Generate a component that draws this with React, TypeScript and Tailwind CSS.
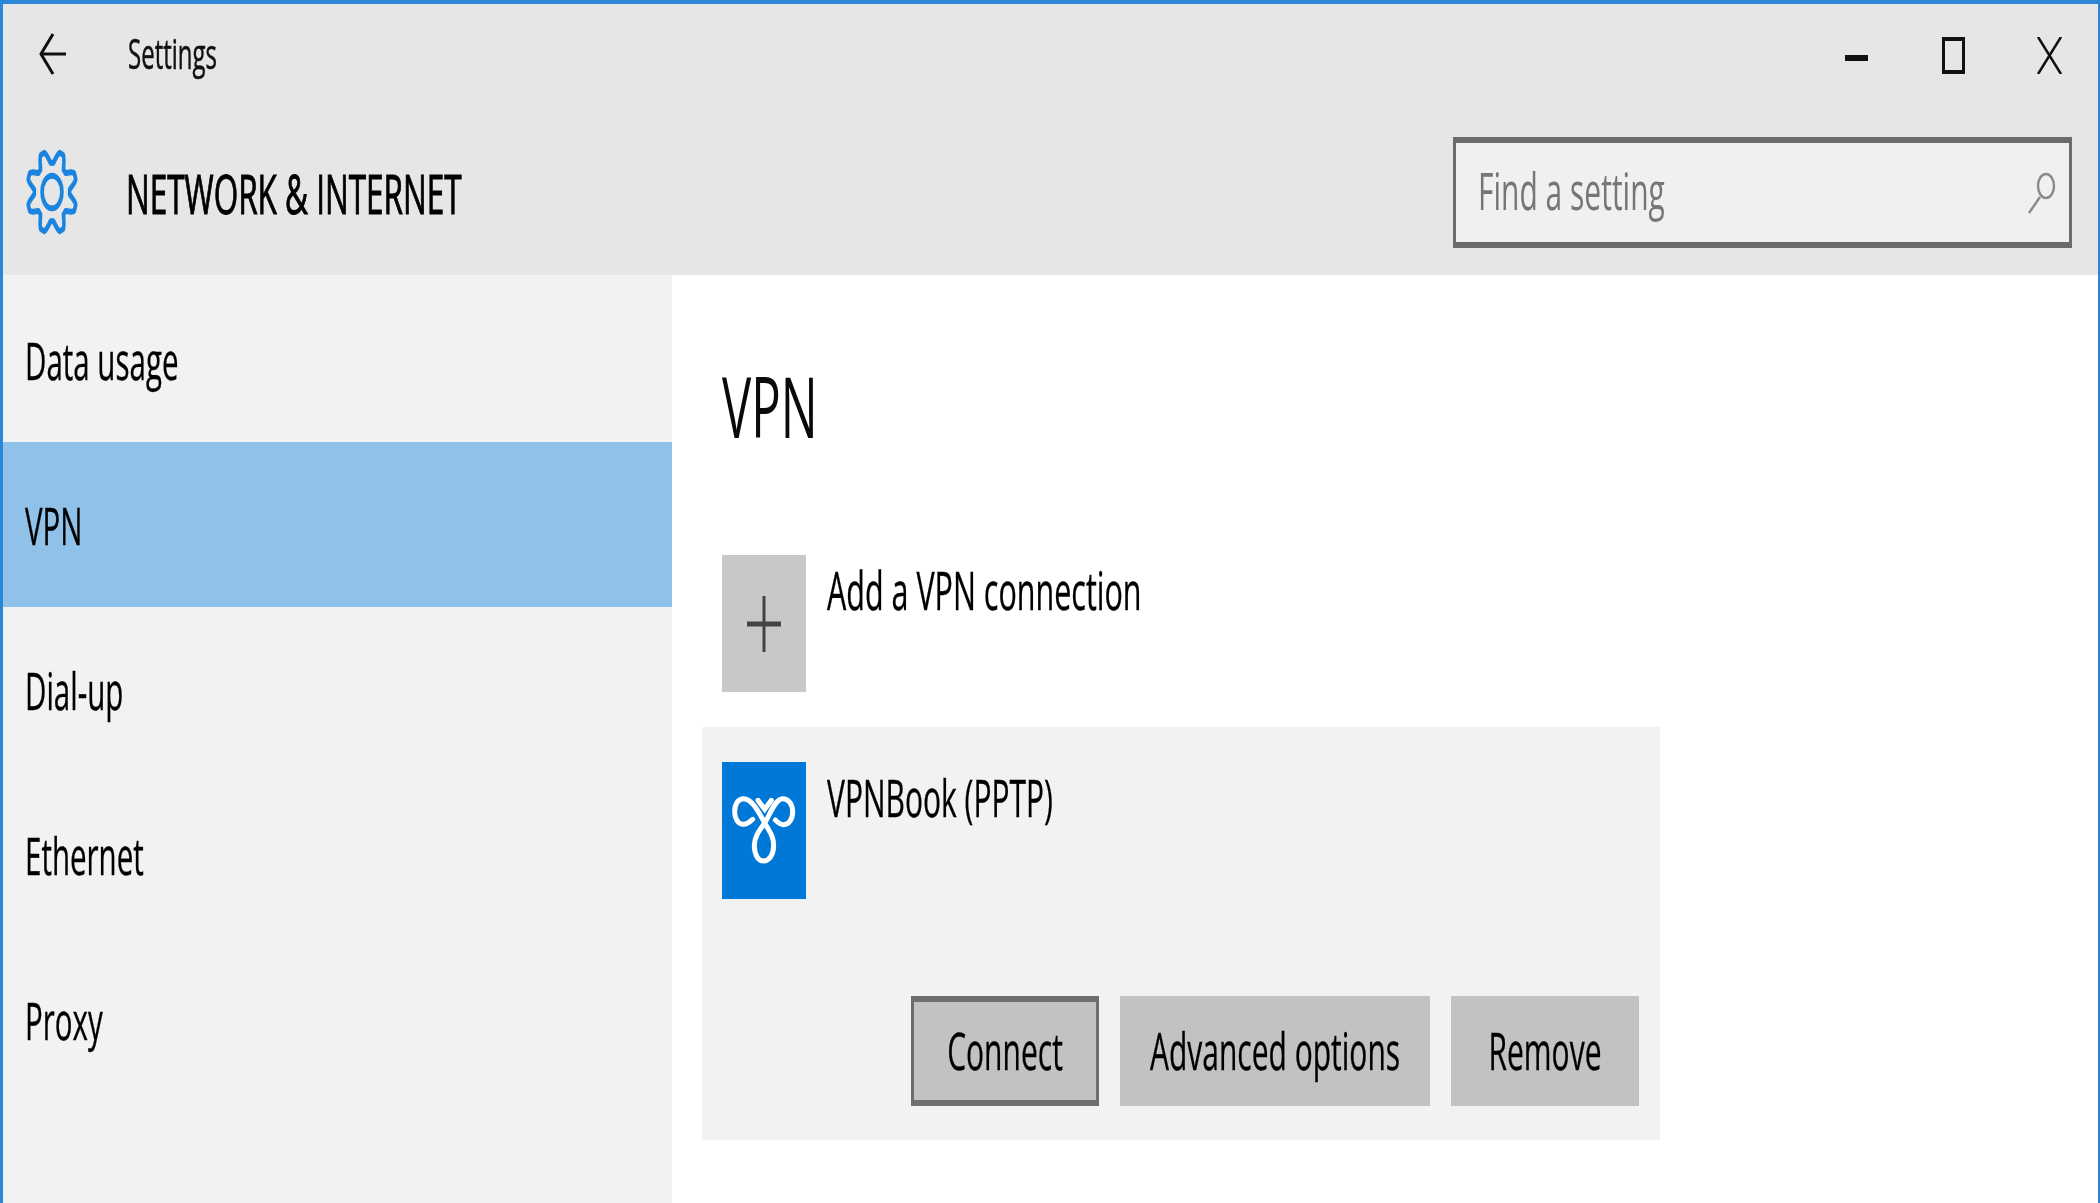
import React from "react";

const FONT = "font-['Open_Sans','Noto_Sans',sans-serif]";

function T({ children, className = "" }: { children: React.ReactNode; className?: string }) {
  return <span className={`inline-block whitespace-nowrap origin-center scale-y-[1.72] leading-none ${className}`}>{children}</span>;
}

function gearPath() {
  const pts: string[] = [];
  for (let i = 0; i <= 320; i++) {
    const t = (i / 320) * Math.PI * 2;
    const w = -Math.max(-1, Math.min(1, 1.25 * Math.cos(8 * t)));
    const r = 41 + 7 * w;
    pts.push(`${(i ? "L" : "M") + (50 + r * Math.sin(t)).toFixed(2)} ${(50 - r * Math.cos(t)).toFixed(2)}`);
  }
  return pts.join(" ") + "Z";
}

function SideItem({ label, active }: { label: string; active?: boolean }) {
  return (
    <div className={`h-[165px] flex items-center pl-[22px] pt-[3px] ${active ? "bg-[#90c1e9]" : ""}`}>
      <T className="text-[29.5px] text-black [-webkit-text-stroke:0.2px_#000]">{label}</T>
    </div>
  );
}

function Btn({ label, className }: { label: string; className: string }) {
  return (
    <div className={`h-[110px] flex items-center justify-center bg-[#c2c2c2] ${className}`}>
      <T className="text-[30px] text-black [-webkit-text-stroke:0.2px_#000]">{label}</T>
    </div>
  );
}

export default function App() {
  return (
    <div className={`${FONT} w-[2100px] h-[1203px] overflow-hidden flex flex-col bg-white border-t-4 border-l-[3px] border-r-[2px] border-[#2b86d8] blur-[0.5px]`}>
      <header className="h-[271px] bg-[#e6e6e6] flex flex-col shrink-0">
        <div className="h-[133px] flex items-start shrink-0">
          <svg className="w-[28px] h-[42px] ml-[36px] mt-[29px]" viewBox="0 0 28 42" preserveAspectRatio="none" fill="none" stroke="#111" strokeWidth="3">
            <path d="M27 21H2" />
            <path d="M14 1 2 21l12 20" />
          </svg>
          <T className="ml-[61px] mt-[38px] text-[24px] text-[#111] [-webkit-text-stroke:0.3px_#111]">Settings</T>
          <div className="ml-auto flex items-start">
            <div className="w-[23px] h-[6px] bg-[#111] mt-[51px]" />
            <div className="w-[23px] h-[37px] border-x-[3px] border-y-[4px] border-[#111] ml-[74px] mt-[33px]" />
            <svg className="w-[25px] h-[37px] ml-[72px] mt-[33px] mr-[36px]" viewBox="0 0 25 37" preserveAspectRatio="none" fill="none" stroke="#111" strokeWidth="2.6">
              <path d="M1 0 24 37M24 0 1 37" />
            </svg>
          </div>
        </div>
        <div className="flex-1 flex items-start">
          <svg className="w-[52px] h-[86px] ml-[23px] mt-[12px]" viewBox="0 0 100 100" preserveAspectRatio="none" fill="none" stroke="#1b84e0" strokeWidth="7" strokeLinejoin="round">
            <path d={gearPath()} />
            <ellipse cx="50" cy="50" rx="19" ry="19" />
          </svg>
          <T className="ml-[48px] mt-[40px] text-[31.5px] text-black [-webkit-text-stroke:0.6px_#000]">NETWORK &amp; INTERNET</T>
          <div className="ml-auto mr-[26px] mt-[0px] w-[619px] h-[111px] border-y-[6px] border-x-[3px] border-[#6b6b6b] bg-[#f0f0f0] flex items-center pl-[22px] pr-[13px]">
            <T className="text-[30px] text-[#767676] -mt-[3px]">Find a setting</T>
            <svg className="ml-auto w-[28px] h-[42px]" viewBox="0 0 28 42" preserveAspectRatio="none" fill="none" stroke="#8a8a8a" strokeWidth="2.4">
              <ellipse cx="18" cy="14" rx="8" ry="12" />
              <path d="M12 25 1 41" />
            </svg>
          </div>
        </div>
      </header>
      <div className="flex-1 flex min-h-0">
        <nav className="w-[669px] bg-[#f2f2f2] shrink-0 pt-[2px]">
          <SideItem label="Data usage" />
          <SideItem label="VPN" active />
          <SideItem label="Dial-up" />
          <SideItem label="Ethernet" />
          <SideItem label="Proxy" />
        </nav>
        <main className="flex-1">
          <div className="pl-[50px] pt-[107px] h-[280px]">
            <T className="text-[49px] text-[#0a0a0a]">VPN</T>
          </div>
          <div className="flex pl-[50px] h-[172px]">
            <div className="w-[84px] h-[137px] bg-[#c8c8c8] flex items-center justify-center">
              <svg className="w-[34px] h-[56px]" viewBox="0 0 34 56" fill="none" stroke="#444" preserveAspectRatio="none">
                <path d="M17 0V56" strokeWidth="3" />
                <path d="M0 28H34" strokeWidth="5" />
              </svg>
            </div>
            <T className="ml-[21px] mt-[19px] text-[30.5px] text-black h-[30px] [-webkit-text-stroke:0.2px_#000]">Add a VPN connection</T>
          </div>
          <section className="ml-[30px] w-[958px] h-[413px] bg-[#f2f2f2] flex flex-col pl-[20px] pr-[21px] pt-[35px]">
            <div className="flex h-[234px]">
              <div className="w-[84px] h-[137px] bg-[#0078d7] shrink-0">
                <svg className="w-full h-full" viewBox="0 0 252 411" preserveAspectRatio="none" fill="none" stroke="#fff" strokeWidth="15" strokeLinecap="round">
                  <path d="M92 172C82 182 74 187 64 187C48 187 38 170 38 150C38 127 48 110 65 110C90 110 110 150 130 186C145 212 155 225 155 250C155 278 142 297 125 297C108 297 97 278 97 250C97 225 110 208 130 180C145 155 160 110 182 110C200 110 212 128 212 150C212 172 200 188 185 188C175 188 168 182 160 174" />
                  <path d="M108 115 128 142 148 115" />
                </svg>
              </div>
              <T className="ml-[21px] mt-[21px] h-[30px] text-[30px] text-black [-webkit-text-stroke:0.2px_#000]">VPNBook (PPTP)</T>
            </div>
            <div className="flex justify-end gap-[20px]">
              <Btn label="Connect" className="w-[188px] mr-[1px] border-y-[6px] border-x-[3px] border-[#6e6e6e]" />
              <Btn label="Advanced options" className="w-[310px]" />
              <Btn label="Remove" className="w-[188px] ml-[1px]" />
            </div>
          </section>
        </main>
      </div>
    </div>
  );
}
